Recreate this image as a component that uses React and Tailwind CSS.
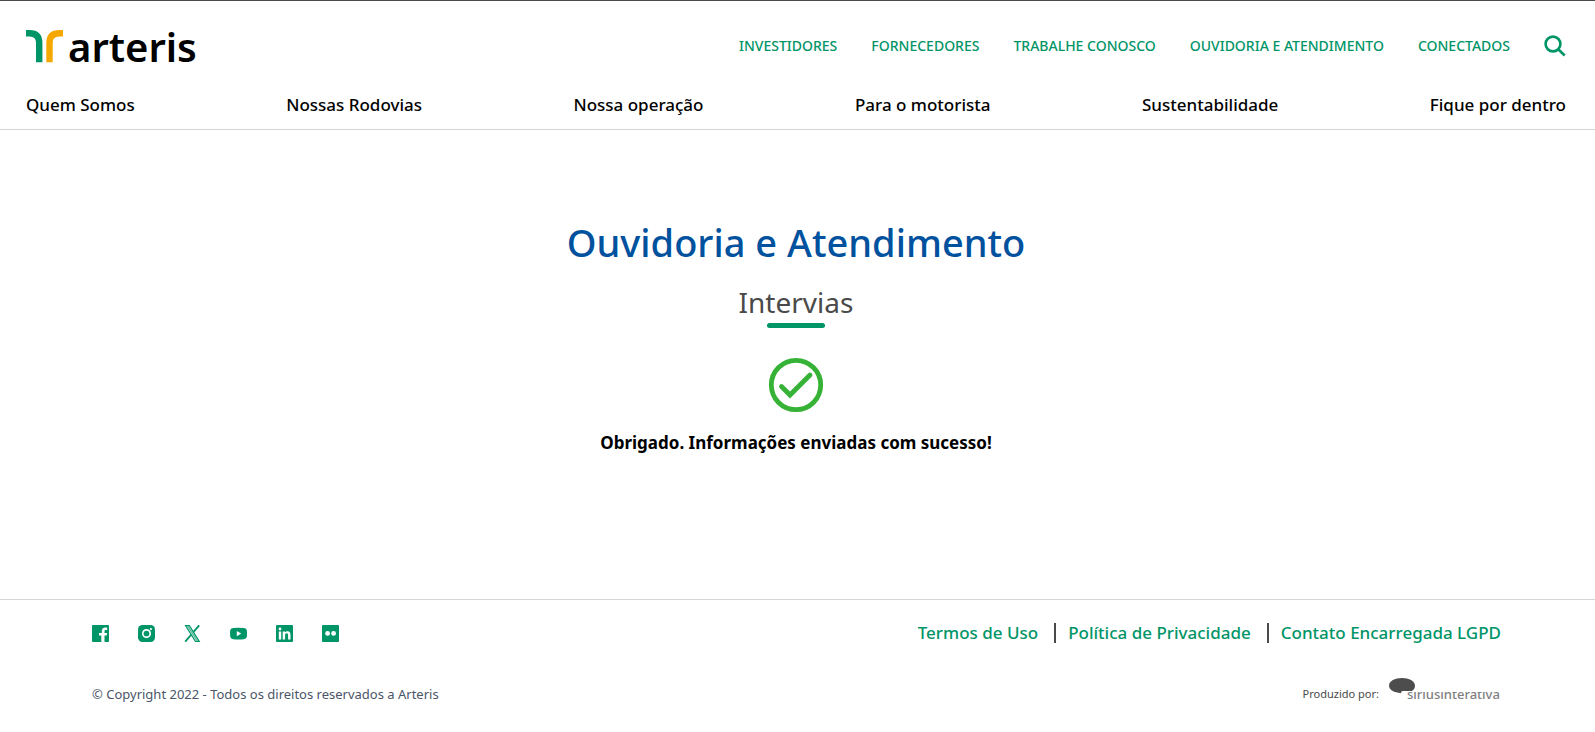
import React from "react";

const topLinks = [
  "INVESTIDORES",
  "FORNECEDORES",
  "TRABALHE CONOSCO",
  "OUVIDORIA E ATENDIMENTO",
  "CONECTADOS",
];

const mainLinks = [
  "Quem Somos",
  "Nossas Rodovias",
  "Nossa operação",
  "Para o motorista",
  "Sustentabilidade",
  "Fique por dentro",
];

const legalLinks = ["Termos de Uso", "Política de Privacidade", "Contato Encarregada LGPD"];

const socialIcons = [
  {
    label: "Facebook",
    drawing: (
      <path
        fillRule="evenodd"
        d="M1 0h15a1 1 0 0 1 1 1v15a1 1 0 0 1-1 1h-3.500v-6.500h2.200l.4-2.600h-2.600V6.400c0-.8.4-1.400 1.500-1.400h1.200V2.700c-.5-.1-1.200-.2-1.900-.2-2.200 0-3.500 1.300-3.500 3.600v1.800H7v2.600h2.300V17H1a1 1 0 0 1-1-1V1a1 1 0 0 1 1-1z"
      />
    ),
  },
  {
    label: "Instagram",
    drawing: (
      <>
        <rect width="17" height="17" rx="4.500" />
        <circle cx="8.500" cy="8.500" r="3.700" fill="none" stroke="#fff" strokeWidth="1.700" />
        <circle cx="12.900" cy="4.100" r="1.100" fill="#fff" />
      </>
    ),
  },
  {
    label: "X",
    drawing: (
      <>
        <path d="M1.500.5h3.800l10 16h-3.800z" fill="none" stroke="currentColor" strokeWidth="1.200" />
        <path d="M3.600.8l9.900 15.500" fill="none" stroke="currentColor" strokeWidth="1.600" opacity=".6" />
        <path d="M15.200.3L9.300 7.200M7.300 9.600L1.200 16.700" fill="none" stroke="currentColor" strokeWidth="1.800" />
      </>
    ),
  },
  {
    label: "YouTube",
    drawing: (
      <path
        fillRule="evenodd"
        d="M3 2.900q5.500-.5 11 0 2.700.2 2.900 2.500.2 3.100 0 6.200-.2 2.400-2.900 2.600-5.500.5-11 0Q.4 14 .2 11.600q-.3-3.100 0-6.200Q.4 3.100 3 2.900zM6.800 6v5.200l4.400-2.600z"
      />
    ),
  },
  {
    label: "LinkedIn",
    drawing: (
      <>
        <rect width="17" height="17" rx="1" />
        <circle cx="4" cy="4" r="1.400" fill="#fff" />
        <path
          fill="#fff"
          d="M2.800 6.500h2.400v8H2.800zM6.700 6.500H9v1.100c.5-.8 1.300-1.300 2.500-1.300 2.300 0 3 1.500 3 3.700v4.500h-2.400v-4c0-1.200-.2-2.200-1.400-2.200s-1.600.9-1.600 2.100v4.100H6.700z"
        />
      </>
    ),
  },
  {
    label: "Flickr",
    drawing: (
      <>
        <rect width="17" height="17" rx="1" />
        <circle cx="5.600" cy="8.400" r="2.400" fill="#fff" />
        <circle cx="11.600" cy="8.400" r="2.400" fill="#fff" />
      </>
    ),
  },
];

function ArterisLogo() {
  return (
    <svg viewBox="0 0 176 36" className="h-9 w-44 overflow-visible" role="img" aria-label="arteris">
      <path d="M0 5.200h3.500c6.500 0 9.700 3.200 9.700 9.500v19.500" fill="none" stroke="#009567" strokeWidth="6.400" />
      <path d="M37 5.200h-3.500c-6.500 0-10 3.200-10 9.500v19.500" fill="none" stroke="#f5a800" strokeWidth="6.400" />
      <text x="42" y="34" fontSize="40" fontWeight="600">
        arteris
      </text>
    </svg>
  );
}

function SiriusLogo() {
  return (
    <svg viewBox="0 0 112 24" className="h-6 w-28 overflow-visible" role="img" aria-label="siriusinterativa">
      <defs>
        <clipPath id="wordmark">
          <rect x="12" y="14" width="104" height="14" />
        </clipPath>
      </defs>
      <path
        d="M13 0C20 0 26 3 26 7.500c0 2.500-1 4-3 5.500h-9c-1.500 0-1.700.8-2 2.200C5 14.500 0 12 0 7.500 0 3 6 0 13 0z"
        fill="#4d4d4d"
      />
      <text x="18" y="21" fontSize="13" fontWeight="500" fill="#808080" clipPath="url(#wordmark)">
        siriusinterativa
      </text>
    </svg>
  );
}

export default function App() {
  return (
    <div className="border-t border-[#4a4a4a] bg-white font-['Noto_Sans','Open_Sans',sans-serif] text-black">
      <header className="border-b border-[#d6d6d6] pr-[29px] pl-[26px]">
        <div className="flex items-center justify-between pt-[27px]">
          <a href="#inicio">
            <ArterisLogo />
          </a>
          <nav aria-label="Institucional" className="flex items-center gap-[34px] text-sm leading-5 font-medium text-[#009567]">
            {topLinks.map((link) => (
              <a key={link} href="#institucional">
                {link}
              </a>
            ))}
            <button type="button" aria-label="Buscar">
              <svg viewBox="0 0 22 22" className="size-[22px]" fill="none" stroke="currentColor" strokeWidth="2.600">
                <circle cx="9" cy="9" r="7.400" />
                <path d="M14.200 14.200l6.500 6.300" />
              </svg>
            </button>
          </nav>
        </div>
        <nav aria-label="Principal" className="flex justify-between pt-[29px] pb-3 text-[17px] leading-6 font-medium">
          {mainLinks.map((link) => (
            <a key={link} href="#principal">
              {link}
            </a>
          ))}
        </nav>
      </header>

      <main className="flex flex-col items-center pt-[86px] pr-[29px] pb-36 pl-[26px] text-center">
        <h1 className="text-[38px] leading-[52px] font-medium text-[#00519e]">Ouvidoria e Atendimento</h1>
        <h2 className="pt-4 text-[28px] leading-9 font-normal text-[#4a4a4a]">Intervias</h2>
        <div className="mt-[3px] h-[5px] w-[58px] rounded-sm bg-[#009567]" />
        <svg viewBox="0 0 56 56" className="mt-[29px] size-14" fill="none" stroke="#36b336" aria-hidden="true">
          <circle cx="28" cy="28" r="24.700" strokeWidth="4.800" />
          <path d="M13.500 29.500l8.500 8.500L42 18" strokeWidth="4.800" strokeLinecap="round" />
        </svg>
        <p className="pt-[18px] text-[17px] leading-6 font-bold">Obrigado. Informações enviadas com sucesso!</p>
      </main>

      <footer className="border-t border-[#d6d6d6] pt-[23px] pr-[94px] pb-6 pl-[92px] text-[#4a4a4a]">
        <div className="flex items-center justify-between">
          <ul className="flex gap-[29px] text-[#009567]">
            {socialIcons.map(({ label, drawing }) => (
              <li key={label}>
                <a href="#redes" aria-label={label}>
                  <svg viewBox="0 0 17 17" className="size-[17px]" fill="currentColor">
                    {drawing}
                  </svg>
                </a>
              </li>
            ))}
          </ul>
          <ul className="flex items-center text-[17px] leading-5 font-medium text-[#009567]">
            {legalLinks.map((link, index) => (
              <li key={link} className={index > 0 ? "ml-4 border-l-2 border-[#4a4a4a] pl-3" : ""}>
                <a href="#legal">{link}</a>
              </li>
            ))}
          </ul>
        </div>
        <div className="flex items-center justify-between pt-[33px]">
          <p className="pt-2 text-[13px] leading-5 text-[#4a5568]">© Copyright 2022 - Todos os direitos reservados a Arteris</p>
          <div className="flex items-center gap-2.5">
            <span className="pt-2 text-[11px] leading-5">Produzido por:</span>
            <a href="#sirius">
              <SiriusLogo />
            </a>
          </div>
        </div>
      </footer>
    </div>
  );
}
